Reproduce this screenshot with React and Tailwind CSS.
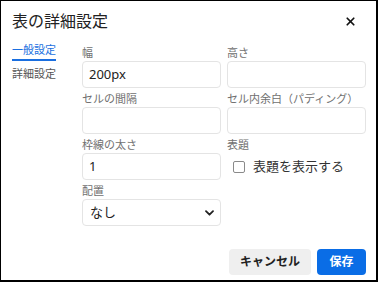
import { X } from 'lucide-react';

const font = { fontFamily: '"Noto Sans", "Noto Sans CJK JP", sans-serif' };

function Field({ label, children }) {
  return (
    <div className="flex flex-col">
      <label className="h-[14px] leading-[14px] text-[11px] text-[#707070] mb-[1px]">{label}</label>
      {children}
    </div>
  );
}

function Input({ value }) {
  return (
    <div className="h-[27px] border border-[#e4e4e4] rounded-[4px] flex items-center px-[6px] text-[13px] text-[#222]">
      {value}
    </div>
  );
}

export default function App() {
  return (
    <div
      className="w-[378px] h-[282px] bg-white border-l border-t border-r-2 border-b-2 border-black flex flex-col"
      style={font}
    >
      {/* Header */}
      <div className="h-[41px] flex items-start justify-between pl-[11px] pr-[19px] pt-[8px]">
        <h1 className="text-[16px] leading-[24px] text-[#222]">表の詳細設定</h1>
        <X className="w-[13px] h-[13px] mt-[6px] text-[#111]" strokeWidth={3.2} />
      </div>

      {/* Body */}
      <div className="flex flex-1">
        <nav className="w-[81px] shrink-0 pl-[11px] flex flex-col items-start">
          <span className="pt-[1px] pb-[2px] leading-[14px] text-[11px] text-[#1a6fe0] border-b-2 border-[#1a6fe0]">一般設定</span>
          <span className="mt-[6px] leading-[14px] text-[11px] text-[#555]">詳細設定</span>
        </nav>

        <div className="w-[284px] grid grid-cols-2 gap-x-[6px] gap-y-[4px] pt-[4px] content-start">
          <Field label="幅"><Input value="200px" /></Field>
          <Field label="高さ"><Input value="" /></Field>
          <Field label="セルの間隔"><Input value="" /></Field>
          <Field label="セル内余白（パディング）"><Input value="" /></Field>
          <Field label="枠線の太さ"><Input value="1" /></Field>
          <Field label="表題">
            <div className="h-[27px] flex items-center pl-[6px] gap-[8px]">
              <span className="w-[12px] h-[12px] border border-[#8a8a8a] rounded-[2px] bg-white" />
              <span className="text-[13px] text-[#333]">表題を表示する</span>
            </div>
          </Field>
          <Field label="配置">
            <div className="h-[27px] border border-[#e4e4e4] rounded-[4px] flex items-center justify-between pl-[7px] pr-[6px] text-[13px] text-[#222]">
              <span>なし</span>
              <svg width="9" height="6" viewBox="0 0 9 6" fill="none">
                <path d="M1 1.2l3.5 3.5 3.5-3.5" stroke="#222" strokeWidth="1.8" strokeLinecap="round" strokeLinejoin="round" />
              </svg>
            </div>
          </Field>
        </div>
      </div>

      {/* Footer */}
      <div className="flex justify-end gap-[6px] pr-[10px] pb-[5px]">
        <button className="w-[82px] h-[26px] rounded-[4px] bg-[#efefef] text-[12px] font-bold text-[#222]">キャンセル</button>
        <button className="w-[49px] h-[26px] rounded-[4px] bg-[#0a6de6] text-[12px] font-bold text-white">保存</button>
      </div>
    </div>
  );
}
